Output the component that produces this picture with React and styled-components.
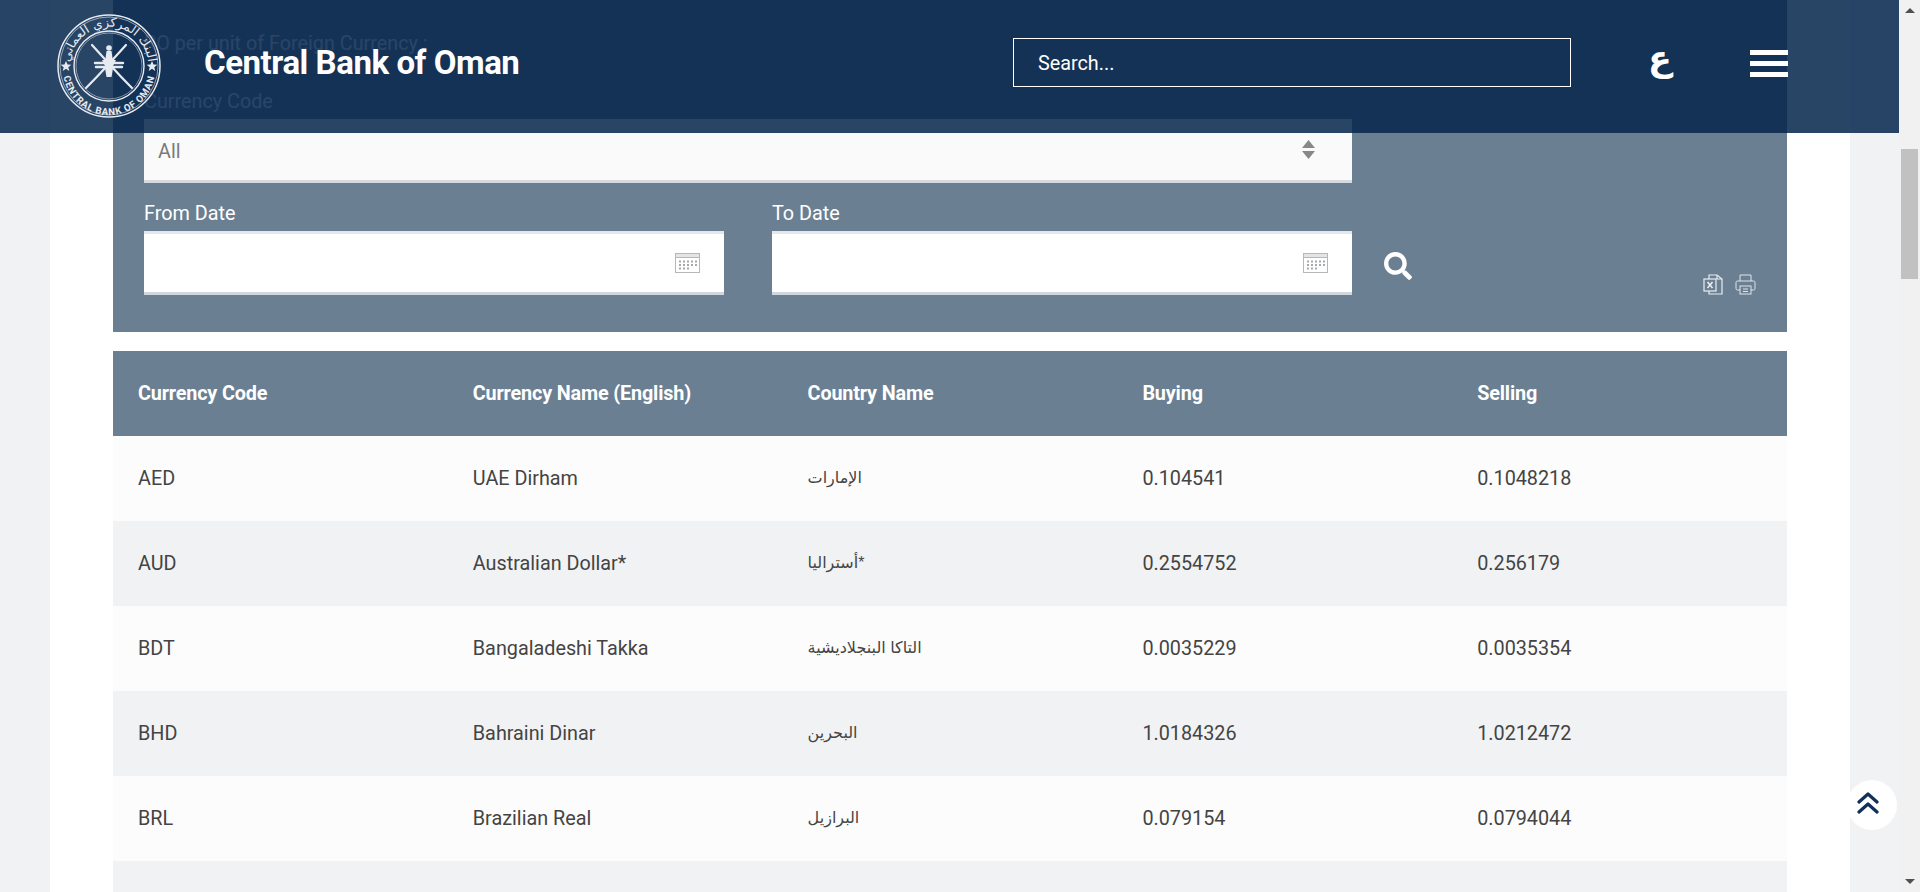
import React from "react";
import styled, { createGlobalStyle } from "styled-components";
import { FaSearch } from "react-icons/fa";

const GlobalStyle = createGlobalStyle`
  html, body {
    margin: 0;
    padding: 0;
    height: 892px;
    overflow: hidden;
    font-family: Roboto, "Liberation Sans", sans-serif;
  }
  * {
    box-sizing: border-box;
  }
`;

const Shell = styled.div`
  display: flex;
  height: 892px;
  overflow: hidden;
`;
const Viewport = styled.div`
  position: relative;
  flex: 1;
  background: #f1f2f3;
  overflow: hidden;
`;
const Content = styled.main`
  margin: 0 49px 0 50px;
  padding: 0 63px;
  background: #fff;
  height: 892px;
`;

const Header = styled.header`
  position: absolute;
  top: 0;
  left: 0;
  right: 0;
  height: 133px;
  background: rgba(4, 36, 75, 0.85);
  display: flex;
  align-items: center;
  padding: 0 111px 8px 56px;
  color: #fff;
`;
const Seal = styled.svg`
  width: 106px;
  height: 106px;
  flex-shrink: 0;
  margin-top: 6px;
`;
const Title = styled.div`
  margin-left: 42px;
  font-size: 33px;
  font-weight: 700;
  letter-spacing: -0.45px;
  width: 809px;
  flex-shrink: 0;
`;
const SearchBox = styled.div`
  width: 558px;
  height: 49px;
  border: 1px solid #fff;
  padding: 1px 24px 0;
  display: flex;
  align-items: center;
  font-size: 19.8px;
`;
const LangLink = styled.a`
  margin: 0 0 8px 77px;
  font-family: "DejaVu Sans", sans-serif;
  font-size: 35px;
  font-weight: 700;
  line-height: 1;
  color: #fff;
`;
const Burger = styled.div`
  margin: 2px 0 0 auto;
  width: 38px;
  display: flex;
  flex-direction: column;
  gap: 6px;
`;
const BurgerBar = styled.span`
  height: 5px;
  background: #fff;
`;

const FilterPanel = styled.section`
  background: #6b7f93;
  padding: 33px 31px 37px;
  color: #fff;
`;
const PanelNote = styled.div`
  font-size: 19.8px;
  line-height: 22px;
  margin-bottom: 35px;
`;
const FieldLabel = styled.label`
  display: block;
  font-size: 19.8px;
  line-height: 24px;
  margin-bottom: 5px;
`;
const SelectBox = styled.div`
  width: 1208px;
  height: 64px;
  background: #fafafa;
  border-bottom: 3px solid #d5dade;
  padding: 4px 37px 0 14px;
  margin-bottom: 19px;
  display: flex;
  align-items: center;
  justify-content: space-between;
  color: #7a7a7a;
  font-size: 19.8px;
`;
const SortSvg = styled.svg`
  margin-top: -4px;
`;
const DateRow = styled.div`
  display: flex;
  align-items: flex-end;
`;
const DateField = styled.div`
  width: 580px;
  margin-right: ${(p) => p.$gap || 0}px;
`;
const DateInput = styled.div`
  height: 64px;
  background: #fff;
  border-top: 3px solid #e3e8ee;
  border-bottom: 3px solid #d0d7dd;
  padding-right: 24px;
  display: flex;
  align-items: center;
  justify-content: flex-end;
`;
const SearchButton = styled.button`
  margin: 0 0 15px 32px;
  padding: 0;
  background: none;
  border: 0;
  color: #fff;
  font-size: 28px;
  line-height: 0;
`;
const ExportIcons = styled.div`
  margin-left: auto;
  display: flex;
  gap: 11px;
`;

const RateTable = styled.table`
  width: 100%;
  margin-top: 19px;
  border-collapse: collapse;
  table-layout: fixed;
  font-size: 19.8px;
`;
const HeadCell = styled.th`
  height: 85px;
  padding: 0 25px;
  background: #6b7f93;
  color: #fff;
  font-weight: 700;
  text-align: left;
  letter-spacing: -0.15px;
`;
const Row = styled.tr`
  background: ${(p) => (p.$even ? "#f1f2f3" : "#fcfcfc")};
`;
const Cell = styled.td`
  height: 85px;
  padding: 0 25px;
  color: #444;
`;
const ArabicText = styled.span`
  font-family: "Liberation Sans", "DejaVu Sans", sans-serif;
  font-size: 16px;
  color: #444;
  position: relative;
  top: -2px;
`;

const TopButton = styled.button`
  position: absolute;
  left: 1847px;
  top: 780px;
  width: 50px;
  height: 50px;
  border: 0;
  border-radius: 50%;
  background: #fff;
  padding: 0 8px 4px 0;
  display: flex;
  align-items: center;
  justify-content: center;
`;

const Scrollbar = styled.aside`
  width: 21px;
  background: #f1f1f1;
  display: flex;
  flex-direction: column;
  align-items: center;
`;
const ScrollArrow = styled.div`
  width: 0;
  height: 0;
  border-left: 5px solid transparent;
  border-right: 5px solid transparent;
  margin-top: ${(p) => (p.$up ? 8 : 0)}px;
  margin-bottom: ${(p) => (p.$up ? 0 : 8)}px;
  border-bottom: ${(p) => (p.$up ? "5px solid #505050" : "0")};
  border-top: ${(p) => (p.$up ? "0" : "5px solid #505050")};
`;
const ScrollTrack = styled.div`
  flex: 1;
  width: 100%;
  padding: 136px 2px 0;
`;
const ScrollThumb = styled.div`
  height: 130px;
  background: #c1c1c1;
`;

const CalendarIcon = () => (
  <svg width="25" height="20" viewBox="0 0 25 20" fill="none">
    <rect x="0.5" y="0.5" width="24" height="19" stroke="#b5b8bb" />
    <rect x="1" y="1" width="23" height="3" fill="#e4e5e6" />
    <line x1="0" y1="4.5" x2="25" y2="4.5" stroke="#b5b8bb" />
    {[7.5, 11, 14.5].map((y) =>
      [4, 8, 12, 16, 20].map((x) =>
        y === 14.5 && x > 12 ? null : (
          <rect key={x + "-" + y} x={x} y={y} width="2" height="2" fill="#a6a9ac" />
        )
      )
    )}
  </svg>
);

const SortArrows = () => (
  <SortSvg width="13" height="19" viewBox="0 0 13 19">
    <path d="M6.5 0 L13 8 H0 Z" fill="#888" />
    <path d="M0 11 H13 L6.5 19 Z" fill="#888" />
  </SortSvg>
);

const ExcelIcon = () => (
  <svg width="21" height="21" viewBox="0 0 21 21" fill="none" stroke="#e8edf1" strokeWidth="1.2">
    <path d="M6 5 V1 H14 L19 5 V20 H6 V17" />
    <path d="M14 1 V5 H19" />
    <rect x="1" y="5" width="12" height="12" />
    <path d="M4.5 8 L9.5 14 M9.5 8 L4.5 14" strokeWidth="1.6" />
  </svg>
);

const PrintIcon = () => (
  <svg width="21" height="21" viewBox="0 0 21 21" fill="none" stroke="#dfe5ea" strokeWidth="1">
    <path d="M5 7 V1 H16 V7" />
    <rect x="1" y="7" width="19" height="9" rx="1.5" />
    <rect x="5" y="12" width="11" height="8" fill="#6b7f93" />
    <path d="M8 15 H13 M8 17.5 H13" />
  </svg>
);

const ChevronsUp = () => (
  <svg width="22" height="22" viewBox="0 0 22 22" fill="none" stroke="#12315a" strokeWidth="3.2" strokeLinecap="round" strokeLinejoin="round">
    <path d="M2 10 L11 2 L20 10" />
    <path d="M2 20 L11 12 L20 20" />
  </svg>
);

const SealLogo = () => (
  <Seal viewBox="-53 -53 106 106">
    <defs>
      <path id="sealTop" d="M -38 10 A 39.3 39.3 0 1 1 38 10" />
      <path id="sealBottom" d="M -46 3 A 46 46 0 0 0 46 3" />
    </defs>
    <g fill="none" stroke="#e6ebf1">
      <circle r="51" strokeWidth="1.5" />
      <circle r="49" strokeWidth="0.6" />
      <circle r="35" strokeWidth="1.4" />
      <circle r="33" strokeWidth="0.5" />
    </g>
    <text fill="#e6ebf1" fontSize="12.5" fontFamily="DejaVu Sans, sans-serif" direction="rtl">
      <textPath href="#sealTop" startOffset="50%" textAnchor="middle">
        البنك المركزي العماني
      </textPath>
    </text>
    <text fill="#e6ebf1" fontSize="9.6" fontWeight="700" fontFamily="Roboto, sans-serif" letterSpacing="0.7">
      <textPath href="#sealBottom" startOffset="50%" textAnchor="middle">
        CENTRAL BANK OF OMAN
      </textPath>
    </text>
    <path d="M-43 -5 l1.5 3.6 3.8 .2 -3 2.4 1 3.7 -3.3 -2.1 -3.3 2.1 1 -3.7 -3 -2.4 3.8 -.2 Z" fill="#e6ebf1" />
    <path d="M43 -5 l1.5 3.6 3.8 .2 -3 2.4 1 3.7 -3.3 -2.1 -3.3 2.1 1 -3.7 -3 -2.4 3.8 -.2 Z" fill="#e6ebf1" />
    <g stroke="#e6ebf1" fill="none" strokeLinecap="round">
      <path d="M-17 -21 L3 1 Q12 11 23 22" strokeWidth="2.2" />
      <path d="M17 -21 L-3 1 Q-12 11 -23 22" strokeWidth="2.2" />
      <path d="M-14 -3 H14 M-13 1 H13" strokeWidth="2.4" />
    </g>
    <path d="M-2.5 -15 h5 l1.5 11 h-8 Z M-7 -6 h14 l-3 6 h-8 Z M-4 2 h8 l-1.5 9 h-5 Z" fill="#e6ebf1" />
    <circle cy="-18" r="2.8" fill="#e6ebf1" />
  </Seal>
);

const columns = ["Currency Code", "Currency Name (English)", "Country Name", "Buying", "Selling"];

const rates = [
  { code: "AED", name: "UAE Dirham", country: "الإمارات", buy: "0.104541", sell: "0.1048218" },
  { code: "AUD", name: "Australian Dollar*", country: "*أستراليا", buy: "0.2554752", sell: "0.256179" },
  { code: "BDT", name: "Bangaladeshi Takka", country: "التاكا البنجلاديشية", buy: "0.0035229", sell: "0.0035354" },
  { code: "BHD", name: "Bahraini Dinar", country: "البحرين", buy: "1.0184326", sell: "1.0212472" },
  { code: "BRL", name: "Brazilian Real", country: "البرازيل", buy: "0.079154", sell: "0.0794044" },
  { code: "row6", name: "", country: "", buy: "", sell: "" },
];

export default function App() {
  return (
    <Shell>
      <GlobalStyle />
      <Viewport>
        <Content>
          <FilterPanel>
            <PanelNote>RO per unit of Foreign Currency :</PanelNote>
            <FieldLabel>Currency Code</FieldLabel>
            <SelectBox>
              All
              <SortArrows />
            </SelectBox>
            <DateRow>
              <DateField $gap={48}>
                <FieldLabel>From Date</FieldLabel>
                <DateInput>
                  <CalendarIcon />
                </DateInput>
              </DateField>
              <DateField>
                <FieldLabel>To Date</FieldLabel>
                <DateInput>
                  <CalendarIcon />
                </DateInput>
              </DateField>
              <SearchButton>
                <FaSearch />
              </SearchButton>
              <ExportIcons>
                <ExcelIcon />
                <PrintIcon />
              </ExportIcons>
            </DateRow>
          </FilterPanel>
          <RateTable>
            <thead>
              <tr>
                {columns.map((c) => (
                  <HeadCell key={c}>{c}</HeadCell>
                ))}
              </tr>
            </thead>
            <tbody>
              {rates.map((r, i) => (
                <Row key={r.code} $even={i % 2 === 1}>
                  <Cell>{r.name && r.code}</Cell>
                  <Cell>{r.name}</Cell>
                  <Cell>
                    <ArabicText dir="rtl">{r.country}</ArabicText>
                  </Cell>
                  <Cell>{r.buy}</Cell>
                  <Cell>{r.sell}</Cell>
                </Row>
              ))}
            </tbody>
          </RateTable>
        </Content>
        <Header>
          <SealLogo />
          <Title>Central Bank of Oman</Title>
          <SearchBox>Search...</SearchBox>
          <LangLink>ع</LangLink>
          <Burger>
            <BurgerBar />
            <BurgerBar />
            <BurgerBar />
          </Burger>
        </Header>
        <TopButton>
          <ChevronsUp />
        </TopButton>
      </Viewport>
      <Scrollbar>
        <ScrollArrow $up />
        <ScrollTrack>
          <ScrollThumb />
        </ScrollTrack>
        <ScrollArrow />
      </Scrollbar>
    </Shell>
  );
}
